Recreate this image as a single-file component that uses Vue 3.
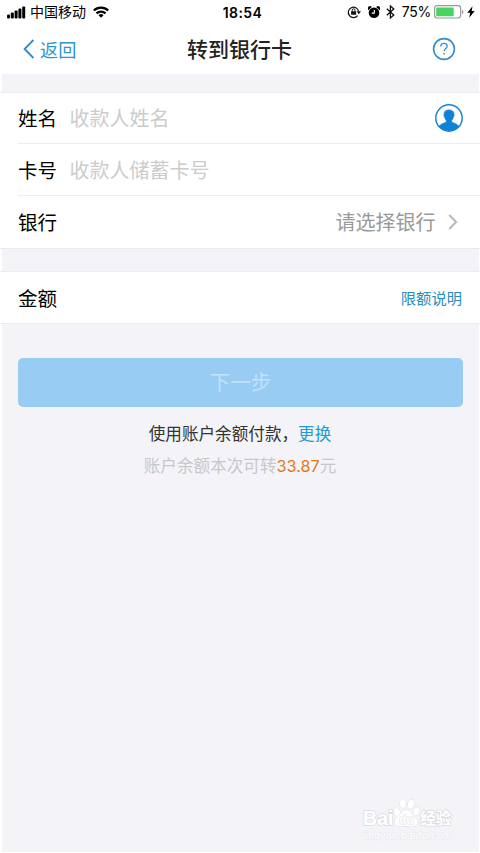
<script setup>
const signal = [4, 6, 8, 10, 12]
const fields = [
  { label: '姓名', hint: '收款人姓名', contact: true },
  { label: '卡号', hint: '收款人储蓄卡号' },
  { label: '银行', value: '请选择银行' },
]
</script>

<template>
  <div class="screen">
    <header>
      <div class="status">
        <div class="carrier">
          <svg class="signal" width="20" height="13" viewBox="0 0 20 13">
            <rect v-for="(h, i) in signal" :key="i" :x="i * 3.8" :y="12.5 - h" width="3" :height="h" rx="1" />
          </svg>
          <span class="operator">中国移动</span>
          <svg class="wifi" width="16" height="12" viewBox="0 0 16 12" fill="none" stroke="#000" stroke-width="2.3">
            <path d="M.8 4.5a10.3 10.3 0 0 1 14.4 0M3.5 7.4a6.4 6.4 0 0 1 9 0" />
            <path d="M5.5 9.2a3.6 3.6 0 0 1 5 0L8 11.8Z" fill="#000" stroke="none" />
          </svg>
        </div>
        <span class="time">18:54</span>
        <div class="indicators">
          <svg width="14" height="14" viewBox="0 0 14 14" fill="none" stroke="#111" stroke-width="1.2">
            <path d="M10.6 10.6a5.2 5.2 0 1 1 1-4.2" />
            <path d="M9.6 6.2H14l-2.2 3Z" fill="#111" stroke="none" />
            <rect x="4.1" y="6.2" width="5" height="3.6" rx=".5" fill="#111" stroke="none" />
            <path d="M5.2 6.500V5.200a1.400 1.400 0 0 1 2.800 0v1.300" stroke-width="1" />
          </svg>
          <svg class="alarm" width="12" height="13" viewBox="0 0 12 13">
            <circle cx="6" cy="6.800" r="5.300" />
            <path d="M.2 4.200A2.300 2.300 0 0 1 3.800 1ZM11.800 4.200A2.300 2.300 0 0 0 8.200 1Z" />
            <path d="M6.300 4v3.100H3.700" fill="none" stroke="#fff" stroke-width="1.100" />
          </svg>
          <svg class="bluetooth" width="9" height="14" viewBox="0 0 9 14" fill="none" stroke="#111" stroke-width="1.300">
            <path d="m.8 3.700 7 6.200-3.400 3V1l3.400 3-7 6.200" />
          </svg>
          <span class="percent">75%</span>
          <svg class="battery" width="30" height="14" viewBox="0 0 30 14">
            <rect x=".6" y=".7" width="26" height="12.300" rx="2.400" fill="#fff" stroke="#999" stroke-width="1.200" />
            <rect x="2.200" y="2.400" width="17.500" height="8.800" rx=".6" fill="#48d362" />
            <path d="M28 4.800q1.400.4 1.400 2.100T28 9Z" fill="#999" />
          </svg>
          <svg class="bolt" width="8" height="12" viewBox="0 0 8 12">
            <path d="M5.500.3.300 6.700h2.900L2.200 11.700 7.700 4.900H4.700Z" />
          </svg>
        </div>
      </div>
      <nav>
        <div class="back">
          <svg width="12" height="20" viewBox="0 0 12 20" fill="none" stroke="#2f8cc6" stroke-width="1.800">
            <path d="M10.400 1 1.600 10l8.800 9" />
          </svg>
          <span>返回</span>
        </div>
        <h1>转到银行卡</h1>
        <svg class="help" width="24" height="24" viewBox="0 0 24 24" fill="none" stroke="#3b8dca" stroke-width="1.600">
          <circle cx="12" cy="12" r="10.400" />
          <path d="M8.800 9.400c0-1.900 1.400-3 3.200-3s3.200 1.100 3.200 2.800c0 2.200-3.100 2.400-3.100 5.100" stroke-width="1.300" />
          <path d="M12.100 15.900v1.700" />
        </svg>
      </nav>
    </header>

    <section class="group">
      <div v-for="f in fields" :key="f.label" class="row">
        <span class="label">{{ f.label }}</span>
        <span class="hint">{{ f.hint }}</span>
        <svg v-if="f.contact" width="28" height="28" viewBox="0 0 28 28">
          <circle cx="14" cy="14" r="13.200" fill="#fff" stroke="#1c85d0" stroke-width="1.500" />
          <path d="M4.200 22.200c1.200-2 4.500-3.100 7-4v-2.100c-1-.8-1.400-2-1.600-3.200-.8-.5-1-2.500-.3-2.900C8.800 7.400 10.900 5.900 14 5.900s5.200 1.500 4.700 4.100c.7.4.5 2.400-.3 2.900-.2 1.200-.6 2.400-1.600 3.200v2.100c2.500.9 5.800 2 7 4A13 13 0 0 1 4.200 22.200Z" fill="#0f82d6" stroke="#0f82d6" stroke-width=".7" />
        </svg>
        <div v-if="f.value" class="choice">
          <span>{{ f.value }}</span>
          <svg width="10" height="16" viewBox="0 0 10 16" fill="none" stroke="#b6b6b6" stroke-width="1.800">
            <path d="m1.200 1 7 7-7 7" />
          </svg>
        </div>
      </div>
    </section>

    <section class="group amount">
      <div class="row">
        <span class="label">金额</span>
        <a class="limit">限额说明</a>
      </div>
    </section>

    <button type="button" disabled>下一步</button>
    <p class="method">使用账户余额付款，<a>更换</a></p>
    <p class="balance">账户余额本次可转<b>33.87</b>元</p>

    <div class="watermark">
      <div class="brand">
        <span>Bai</span>
        <svg width="27" height="31" viewBox="0 0 27 31" fill="#fff" stroke="#dadadf" stroke-width=".9">
          <ellipse cx="4" cy="14" rx="3" ry="4" transform="rotate(-15 4 14)" />
          <ellipse cx="10" cy="5.500" rx="3" ry="4.400" />
          <ellipse cx="18" cy="6" rx="3" ry="4.400" transform="rotate(12 18 6)" />
          <ellipse cx="23.500" cy="13.500" rx="2.900" ry="4" transform="rotate(18 23.500 13.500)" />
          <path d="M13.500 12c4 0 4.500 4 8.500 7 3.500 3 3.500 9-2 9.500-3 .3-4-.5-7-.5s-4 .8-7 .5c-5.500-.5-5-7-1.500-10C8.500 15 9.500 12 13.500 12Z" />
          <text x="13.300" y="26" text-anchor="middle" class="du">du</text>
        </svg>
        <span class="experience">经验</span>
      </div>
      <div class="domain">jingyan.baidu.com</div>
    </div>
  </div>
</template>

<style>
body {
  margin: 0;
  background: #fff;
}
</style>

<style scoped>
.screen {
  box-sizing: border-box;
  position: relative;
  width: 480px;
  height: 853px;
  overflow: hidden;
  background: linear-gradient(#f3f3f8, #f3f3f8) 2px 0 / 477px 852px no-repeat #fff;
  font-family: Inter, "Noto Sans CJK SC", sans-serif;
  color: #000;
}

header {
  height: 74px;
  background: #fff;
}

.status {
  display: grid;
  grid-template-columns: 1fr auto 1fr;
  align-items: center;
  height: 24px;
  padding: 0 5px 0 7px;
}

.carrier,
.indicators,
.back,
.choice,
.brand {
  display: flex;
  align-items: center;
}

.operator {
  margin: 0 7px 0 3px;
  font-size: 14px;
  line-height: 24px;
}

.time {
  padding-left: 3px;
  font-size: 14px;
  font-weight: 600;
  letter-spacing: 0.4px;
}

.indicators {
  justify-content: flex-end;
}

.alarm {
  margin-left: 7px;
}

.bluetooth {
  margin-left: 6px;
}

.percent {
  margin: 0 3px 0 7px;
  font-size: 14px;
  line-height: 24px;
  letter-spacing: -0.3px;
}

.bolt {
  margin-left: 3px;
}

nav {
  display: grid;
  grid-template-columns: 1fr auto 1fr;
  align-items: center;
  height: 50px;
  padding: 0 24px 0 23px;
}

.back {
  gap: 5px;
  color: #3095ca;
  font-size: 18.2px;
  line-height: 28px;
}

.back span,
h1 {
  padding-top: 1px;
}

h1 {
  margin: 0;
  color: #222;
  font-size: 21px;
  font-weight: 500;
  line-height: 30px;
}

.help {
  justify-self: end;
}

.group {
  margin-top: 18px;
  padding-left: 18px;
  border-top: 1px solid #ededf1;
  border-bottom: 1px solid #ebebef;
  background: #fff;
}

.row {
  display: flex;
  align-items: center;
  height: 51px;
  padding-right: 17px;
}

.row:first-child:not(:last-child) {
  height: 50px;
}

.row:last-child:not(:first-child) {
  height: 52px;
}

.row + .row {
  border-top: 1px solid #eee;
}

.label {
  width: 51.5px;
  padding-top: 2px;
  font-size: 19.5px;
  line-height: 30px;
}

.hint {
  flex: 1;
  padding-top: 2px;
  color: #ccc;
  font-size: 20px;
  line-height: 30px;
}

.choice {
  gap: 12px;
  padding-right: 5.5px;
  color: #999;
  font-size: 20px;
  line-height: 30px;
}

.choice span {
  padding-top: 2px;
}

.amount {
  margin-top: 22px;
}

.limit {
  margin: 0 1px 1px auto;
  color: #278dbb;
  font-size: 15.3px;
}

button {
  display: block;
  width: 445px;
  height: 49px;
  margin: 34px 0 0 18px;
  padding: 1px 0 0;
  border: 0;
  border-radius: 5px;
  background: #99ccf3;
  color: #c1e1fa;
  font: 20.7px/48px Inter, "Noto Sans CJK SC", sans-serif;
}

p {
  margin: 0;
  font-size: 16.6px;
  line-height: 32px;
  text-align: center;
}

.method {
  margin-top: 11px;
  color: #333;
}

.method a {
  color: #269bd1;
}

.balance {
  color: #c8c8cc;
}

.balance b {
  color: #e07818;
  font-weight: 400;
  font-size: 16.2px;
}

.watermark {
  position: absolute;
  left: 363px;
  top: 798px;
  color: #fff;
  -webkit-text-stroke: 1.4px #dadadf;
  paint-order: stroke fill;
}

.brand {
  height: 31px;
  font: 700 19.5px/31px "Liberation Sans", "Noto Sans CJK SC", sans-serif;
}

.brand > span {
  padding-top: 9px;
}

.brand .experience {
  font-size: 15.5px;
}

.du {
  font: 700 12px "Liberation Sans", sans-serif;
}

.domain {
  font: 11px/13px "Liberation Sans", sans-serif;
  -webkit-text-stroke: 0.8px #e6e6eb;
}
</style>
